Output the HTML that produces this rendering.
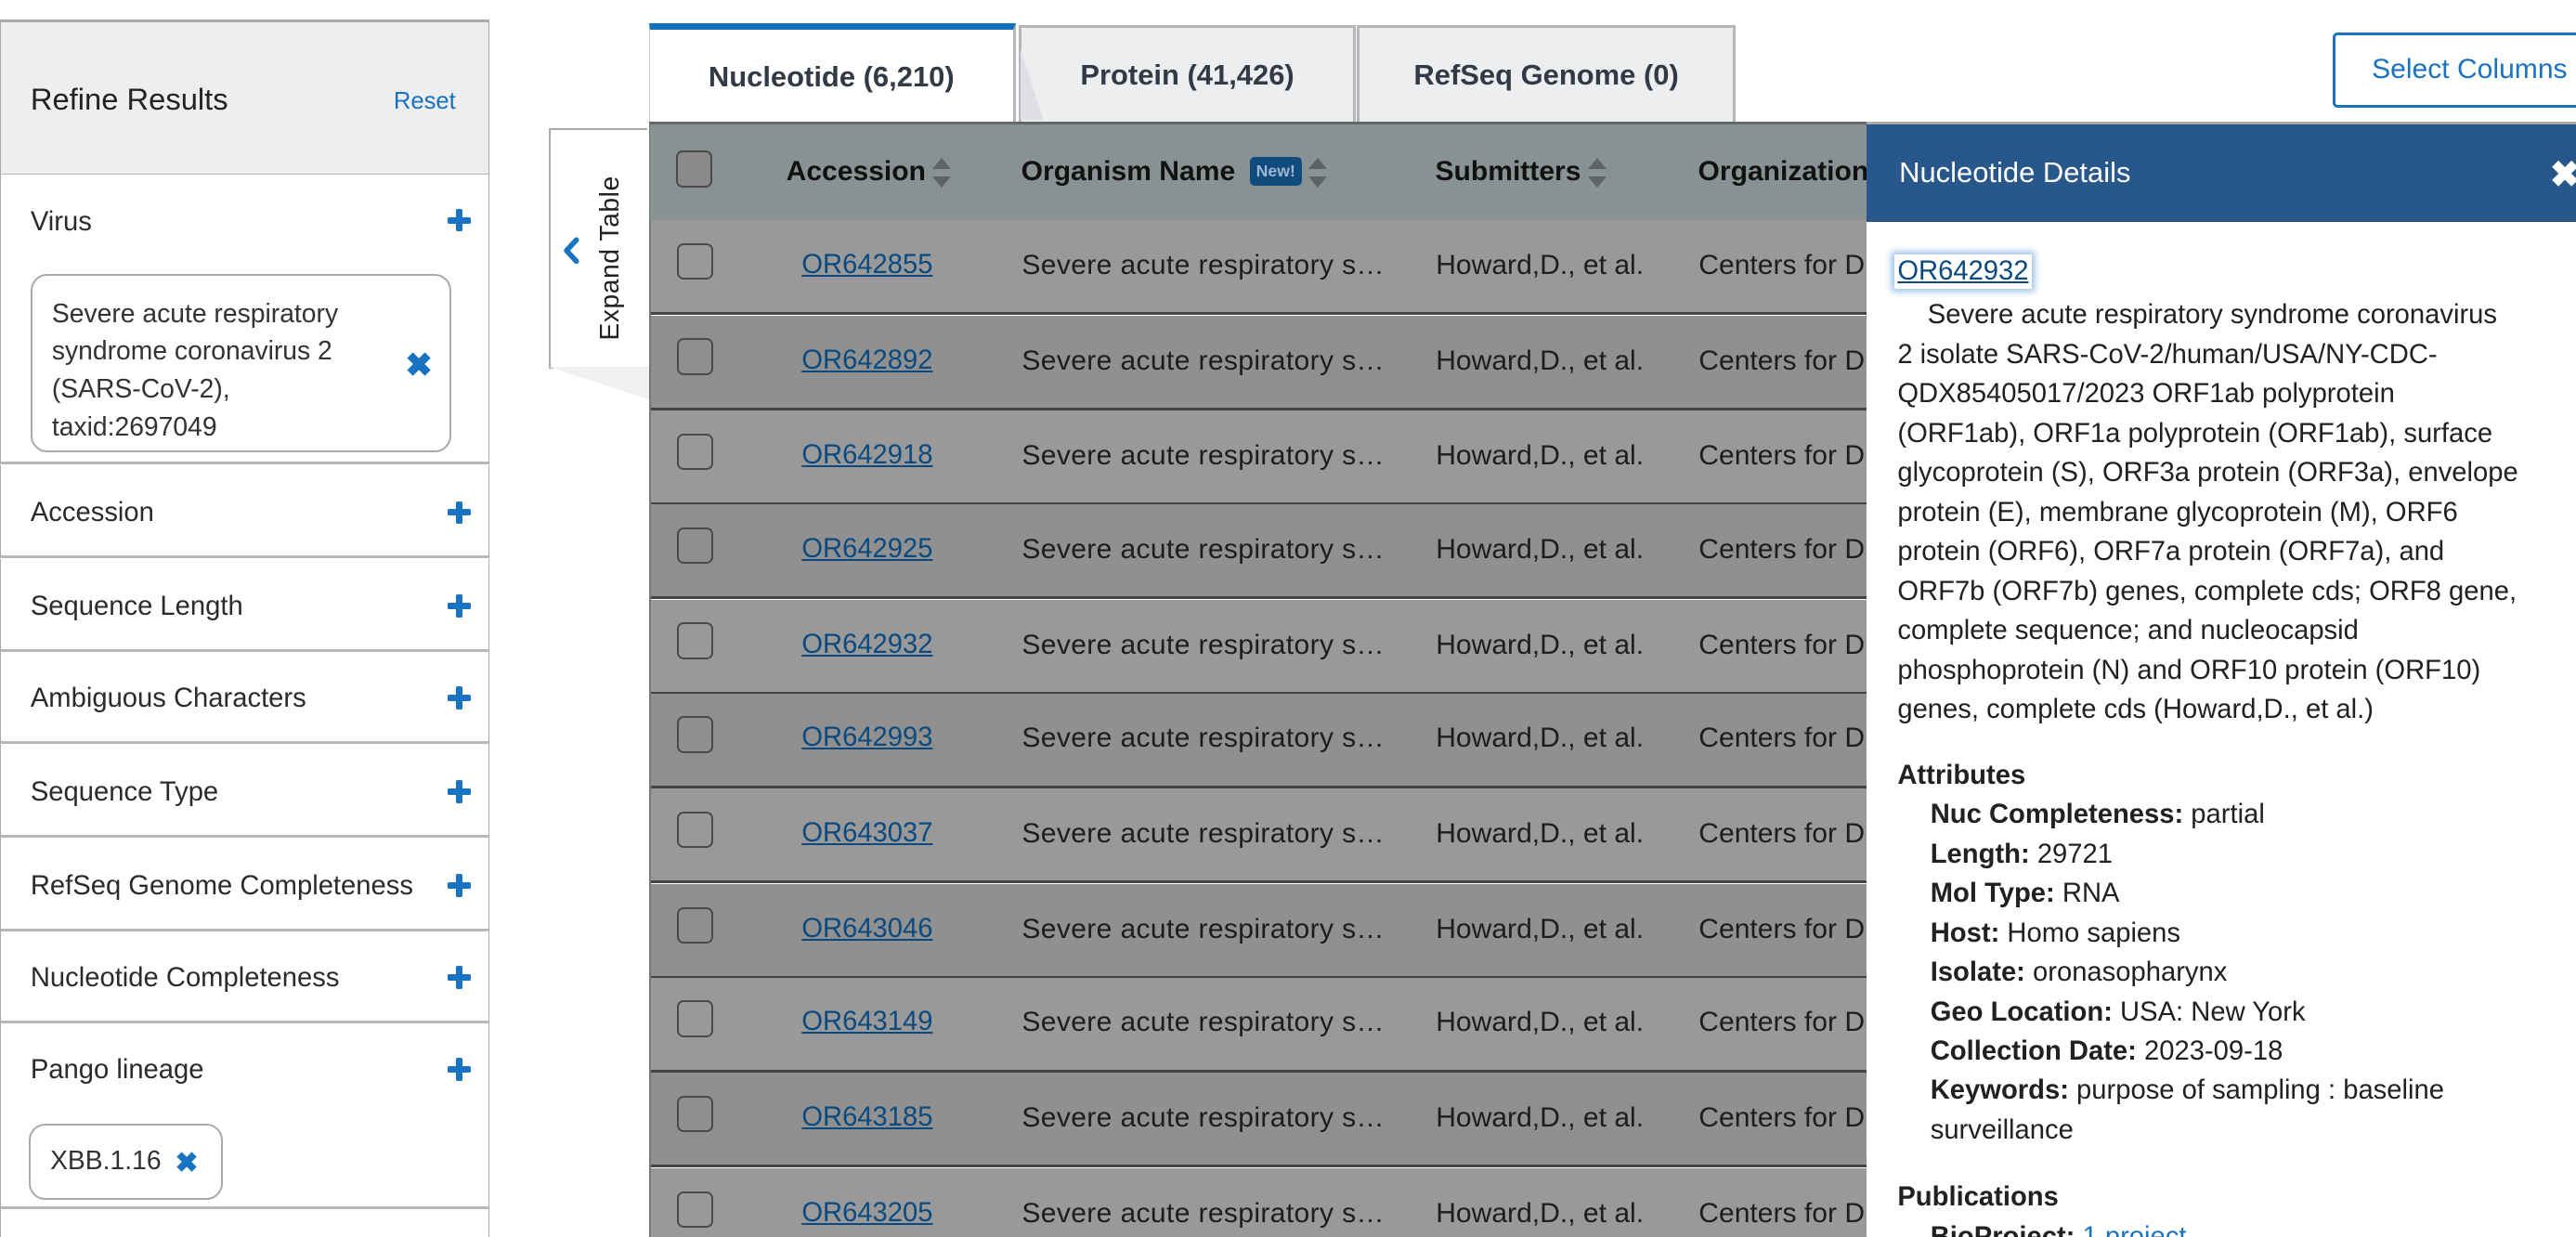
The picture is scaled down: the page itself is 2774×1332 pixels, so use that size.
<!DOCTYPE html>
<html><head><meta charset="utf-8"><style>
html,body{margin:0;padding:0;background:#fff;overflow:hidden}
body{width:2774px;height:1332px}
#w{position:relative;width:1568px;height:753px;zoom:1.76913;overflow:hidden;font-family:"Liberation Sans",sans-serif;color:#212121;font-size:16px}
.a{position:absolute;white-space:nowrap}
.plus{position:absolute;width:14px;height:14px}
.plus:before{content:"";position:absolute;left:5px;top:0;width:4px;height:14px;background:#1a73c0;border-radius:1px}
.plus:after{content:"";position:absolute;left:0;top:5px;width:14px;height:4px;background:#1a73c0;border-radius:1px}
.sb{position:absolute;left:0;width:297px;border-left:1px solid #aaa;border-right:1px solid #aaa;border-bottom:2px solid #b8b8bc;background:#fff}
.sb span{position:absolute;left:18px;font-size:16.5px;color:#2b2b2b}
.row{position:absolute;left:396px;width:740px;height:56px;border-bottom:2px solid #444}
.cb{position:absolute;left:16px;top:14px;width:20px;height:20px;border:1.5px solid #4a4a4a;border-radius:4px}
.lk{position:absolute;left:92px;top:18px;color:#0b4a7f;text-decoration:underline;font-size:16.5px}
.c2{position:absolute;left:226px;top:18px;font-size:17px;color:#1d1d1d;letter-spacing:0.2px}
.c3{position:absolute;left:478px;top:18px;font-size:17px;color:#1d1d1d}
.c4{position:absolute;left:638px;top:18px;font-size:17px;color:#1d1d1d}
.tab{position:absolute;top:15px;height:58px;background:#eceef0;border:2px solid #b4b6ba;border-bottom:none;font-weight:bold;font-size:17.5px;color:#323a45;text-align:center;line-height:58px}
.sort{display:inline-block;vertical-align:middle;margin-left:4px;width:12px;height:18px;position:relative}
.sort:before{content:"";position:absolute;left:0;top:0;border-left:6px solid transparent;border-right:6px solid transparent;border-bottom:7px solid #5e6466}
.sort:after{content:"";position:absolute;left:0;bottom:0;border-left:6px solid transparent;border-right:6px solid transparent;border-top:7px solid #5e6466}
.d{position:absolute;left:1155px;font-size:16.5px;color:#212121;line-height:24px;white-space:nowrap}
.d b{font-weight:bold}
.h{position:absolute;top:19px;font-weight:bold;font-size:17px;color:#111}
</style></head><body><div id="w">

<div class="sb" style="top:12px;height:92px;background:#eceef0;border-top:2px solid #aaa">
  <span style="top:36px;font-size:18.5px;color:#222">Refine Results</span>
  <span style="left:239px;top:40px;font-size:14.5px;color:#1a73c0">Reset</span>
</div>
<div class="sb" style="top:106px;height:175px">
  <span style="top:20px">Virus</span><div class="plus" style="left:272px;top:21px"></div>
  <div style="position:absolute;left:18px;top:61px;width:254px;height:106px;border:1.5px solid #aaa;border-radius:10px"></div>
  <span style="left:31px;top:73px;font-size:16px;line-height:23px;color:#333">Severe acute respiratory<br>syndrome coronavirus 2<br>(SARS-CoV-2),<br>taxid:2697049</span>
  <span style="left:246px;top:105px;color:#1a73c0;font-weight:bold;font-size:20px">✖</span>
</div>
<div class="sb" style="top:283px;height:55px"><span style="top:20px">Accession</span><div class="plus" style="left:272px;top:22px"></div></div>
<div class="sb" style="top:340px;height:55px"><span style="top:20px">Sequence Length</span><div class="plus" style="left:272px;top:22px"></div></div>
<div class="sb" style="top:397px;height:54px"><span style="top:19px">Ambiguous Characters</span><div class="plus" style="left:272px;top:21px"></div></div>
<div class="sb" style="top:453px;height:55px"><span style="top:20px">Sequence Type</span><div class="plus" style="left:272px;top:22px"></div></div>
<div class="sb" style="top:510px;height:55px"><span style="top:20px">RefSeq Genome Completeness</span><div class="plus" style="left:272px;top:22px"></div></div>
<div class="sb" style="top:567px;height:54px"><span style="top:19px">Nucleotide Completeness</span><div class="plus" style="left:272px;top:21px"></div></div>
<div class="sb" style="top:623px;height:111px">
  <span style="top:19px">Pango lineage</span><div class="plus" style="left:272px;top:21px"></div>
  <div style="position:absolute;left:17px;top:61px;width:116px;height:44px;border:1.5px solid #aaa;border-radius:10px"></div>
  <span style="left:30px;top:74px;font-size:16px;color:#333">XBB.1.16</span>
  <span style="left:106px;top:75px;color:#1a73c0;font-weight:bold;font-size:17px">✖</span>
</div>
<div class="sb" style="top:736px;height:30px;border-bottom:none"></div>

<div class="tab" style="left:395px;width:221px;background:#fff;border-top:4px solid #1173bf;border-left:1px solid #ccc;top:14px;height:60px">Nucleotide (6,210)</div>
<div class="tab" style="left:620px;width:202px">Protein (41,426)</div>
<div class="tab" style="left:826px;width:227px">RefSeq Genome (0)</div>
<svg class="a" style="left:621px;top:30px" width="30" height="45"><polygon points="0,0 14,43 0,43" fill="#dfe0e3"/></svg>

<div class="a" style="left:1420px;top:20px;width:160px;height:42px;border:2px solid #1a73c0;border-radius:3px;color:#1a73c0;font-size:17px;line-height:42px;padding-left:22px">Select Columns</div>

<div class="a" style="left:334px;top:78px;width:59px;height:144px;border:1.5px solid #aaa;border-right:none;background:#fff"></div>
<svg class="a" style="left:334px;top:223px" width="62" height="20"><polygon points="0,0 61,0 61,20" fill="#f0f0f0"/></svg>
<div class="a" style="left:362px;top:97px;transform-origin:0 0;transform:rotate(-90deg) translate(-110px,0);font-size:16px;color:#222;letter-spacing:0.3px">Expand Table</div>
<svg class="a" style="left:341px;top:143px" width="14" height="20"><path d="M10 3 L4 9.5 L10 16" stroke="#1a73c0" stroke-width="3.2" fill="none" stroke-linecap="round" stroke-linejoin="round"/></svg>

<div class="a" style="left:395px;top:74px;width:745px;height:58px;background:#889293;border-top:2px solid #666;border-bottom:2px solid #111;border-left:1px solid #777">
  <div class="cb" style="top:16px;left:16px;background:#8a8a8a"></div>
  <div class="h" style="left:83px">Accession<span class="sort"></span></div>
  <div class="h" style="left:226px">Organism Name <span style="display:inline-block;background:#0f4b7d;color:#9cb7cf;font-size:10px;padding:3px 4px;border-radius:3px;vertical-align:2px;margin-left:4px">New!</span><span class="sort"></span></div>
  <div class="h" style="left:478px">Submitters<span class="sort"></span></div>
  <div class="h" style="left:638px">Organization</div>
</div>

<div class="row" style="top:134px;background:#999"><div class="cb"></div><span class="lk">OR642855</span><span class="c2">Severe acute respiratory s…</span><span class="c3">Howard,D., et al.</span><span class="c4">Centers for D</span></div>
<div class="row" style="top:192px;background:#8f908f"><div class="cb"></div><span class="lk">OR642892</span><span class="c2">Severe acute respiratory s…</span><span class="c3">Howard,D., et al.</span><span class="c4">Centers for D</span></div>
<div class="row" style="top:250px;background:#999"><div class="cb"></div><span class="lk">OR642918</span><span class="c2">Severe acute respiratory s…</span><span class="c3">Howard,D., et al.</span><span class="c4">Centers for D</span></div>
<div class="row" style="top:307px;background:#8f908f"><div class="cb"></div><span class="lk">OR642925</span><span class="c2">Severe acute respiratory s…</span><span class="c3">Howard,D., et al.</span><span class="c4">Centers for D</span></div>
<div class="row" style="top:365px;background:#999"><div class="cb"></div><span class="lk">OR642932</span><span class="c2">Severe acute respiratory s…</span><span class="c3">Howard,D., et al.</span><span class="c4">Centers for D</span></div>
<div class="row" style="top:422px;background:#8f908f"><div class="cb"></div><span class="lk">OR642993</span><span class="c2">Severe acute respiratory s…</span><span class="c3">Howard,D., et al.</span><span class="c4">Centers for D</span></div>
<div class="row" style="top:480px;background:#999"><div class="cb"></div><span class="lk">OR643037</span><span class="c2">Severe acute respiratory s…</span><span class="c3">Howard,D., et al.</span><span class="c4">Centers for D</span></div>
<div class="row" style="top:538px;background:#8f908f"><div class="cb"></div><span class="lk">OR643046</span><span class="c2">Severe acute respiratory s…</span><span class="c3">Howard,D., et al.</span><span class="c4">Centers for D</span></div>
<div class="row" style="top:595px;background:#999"><div class="cb"></div><span class="lk">OR643149</span><span class="c2">Severe acute respiratory s…</span><span class="c3">Howard,D., et al.</span><span class="c4">Centers for D</span></div>
<div class="row" style="top:653px;background:#8f908f"><div class="cb"></div><span class="lk">OR643185</span><span class="c2">Severe acute respiratory s…</span><span class="c3">Howard,D., et al.</span><span class="c4">Centers for D</span></div>
<div class="row" style="top:711px;background:#999"><div class="cb"></div><span class="lk">OR643205</span><span class="c2">Severe acute respiratory s…</span><span class="c3">Howard,D., et al.</span><span class="c4">Centers for D</span></div>
<div class="a" style="left:395px;top:134px;width:1px;height:620px;background:#777"></div>

<div class="a" style="left:1136px;top:75px;width:432px;height:678px;background:#fff"></div>
<div class="a" style="left:1136px;top:74px;width:432px;height:2px;background:#aaa"></div>
<div class="a" style="left:1136px;top:76px;width:432px;height:59px;background:#28578c"></div>
<div class="a" style="left:1156px;top:95px;color:#fff;font-size:17.5px">Nucleotide Details</div>
<div class="a" style="left:1552px;top:94px;color:#fff;font-size:22px;font-weight:bold">✖</div>

<div class="a" style="left:1153px;top:155px;padding:1px 2px;box-shadow:0 0 4px 2px #9dc2e6;color:#0b4a7f;text-decoration:underline;font-size:16.5px">OR642932</div>
<div class="d" style="top:180px">&nbsp;&nbsp;&nbsp;&nbsp;Severe acute respiratory syndrome coronavirus<br>2 isolate SARS-CoV-2/human/USA/NY-CDC-<br>QDX85405017/2023 ORF1ab polyprotein<br>(ORF1ab), ORF1a polyprotein (ORF1ab), surface<br>glycoprotein (S), ORF3a protein (ORF3a), envelope<br>protein (E), membrane glycoprotein (M), ORF6<br>protein (ORF6), ORF7a protein (ORF7a), and<br>ORF7b (ORF7b) genes, complete cds; ORF8 gene,<br>complete sequence; and nucleocapsid<br>phosphoprotein (N) and ORF10 protein (ORF10)<br>genes, complete cds (Howard,D., et al.)</div>
<div class="d" style="top:460px;font-weight:bold">Attributes</div>
<div class="d" style="top:484px;left:1175px"><b>Nuc Completeness:</b> partial<br><b>Length:</b> 29721<br><b>Mol Type:</b> RNA<br><b>Host:</b> Homo sapiens<br><b>Isolate:</b> oronasopharynx<br><b>Geo Location:</b> USA: New York<br><b>Collection Date:</b> 2023-09-18<br><b>Keywords:</b> purpose of sampling : baseline<br>surveillance</div>
<div class="d" style="top:717px;font-weight:bold">Publications</div>
<div class="d" style="top:741px;left:1175px"><b>BioProject:</b> <span style="color:#1a73c0">1 project</span></div>

</div></body></html>
